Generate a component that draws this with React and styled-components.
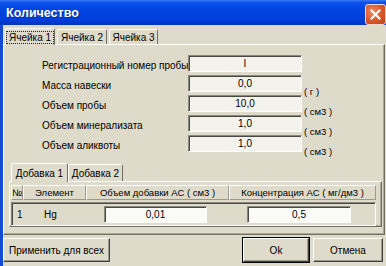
import React from 'react';
import styled, { createGlobalStyle } from 'styled-components';

const GlobalStyle = createGlobalStyle`
  html, body { margin: 0; padding: 0; background: #dfdbca; }
  body { font-family: "Liberation Sans", Arial, sans-serif; }
`;

const Window = styled.div`
  width: 386px;
  height: 266px;
  display: flex;
  flex-direction: column;
  overflow: hidden;
  background: #dfdbca;
  font-family: "Liberation Sans", Arial, sans-serif;
  font-size: 10px;
  color: #000;
`;

const TitleBar = styled.div`
  height: 25px;
  flex: none;
  display: flex;
  align-items: center;
  justify-content: space-between;
  padding-left: 6px;
  background: linear-gradient(to bottom, #3b78f0 0%, #0c52ea 10%, #0045e2 35%, #003edb 80%, #0033c0 100%);
`;

const Title = styled.span`
  color: #fff;
  font-weight: bold;
  font-size: 12.5px;
  text-shadow: 1px 1px 0 #0b2a90;
`;

const CloseButton = styled.div`
  width: 19px;
  height: 19px;
  margin-top: 3px;
  border: 1px solid #f4d8d0;
  border-radius: 3px;
  background: radial-gradient(circle at 35% 35%, #f08a68 0%, #e0582f 50%, #c23d16 100%);
  display: flex;
  align-items: center;
  justify-content: center;
`;

const Client = styled.div`
  flex: 1;
  display: flex;
  flex-direction: column;
  border-left: 3px solid #1a48d6;
  padding: 3px 1px 4px 0;
`;

const TabStrip = styled.div`
  display: flex;
  align-items: flex-end;
  gap: ${p => p.$gap ?? 2}px;
  padding-left: 2px;
  height: ${p => p.$h || 16}px;
  position: relative;
  z-index: 1;
`;

const Tab = styled.div`
  width: ${p => p.$w}px;
  height: ${p => (p.$active ? p.$h + 2 : p.$h)}px;
  box-sizing: border-box;
  display: flex;
  align-items: center;
  justify-content: center;
  background: #dfdbca;
  border-top: 1px solid #fff;
  border-left: 1px solid #fff;
  border-right: 1px solid #716f64;
  border-radius: 2px 2px 0 0;
  margin-bottom: ${p => (p.$active ? -1 : 0)}px;
  font-size: 10px;
  white-space: nowrap;
`;

const FocusText = styled.span`
  outline: ${p => (p.$focus ? '1px dotted #222' : 'none')};
  outline-offset: 0;
  padding: 0 2px;
  line-height: 11px;
`;

const Panel = styled.div`
  flex: 1;
  display: flex;
  flex-direction: column;
  border-top: 1px solid #fff;
  border-left: 1px solid #fff;
  border-right: 1px solid #716f64;
  border-bottom: 1px solid #716f64;
  box-shadow: inset -1px -1px 0 #aca899;
  padding: ${p => p.$pad};
`;

const FieldGrid = styled.div`
  display: grid;
  grid-template-columns: 144px 114px auto;
  grid-auto-rows: 20px;
  column-gap: 2px;
  padding-left: 38px;
`;

const Label = styled.div`
  font-size: 10px;
  padding-top: 5px;
  white-space: nowrap;
`;

const Field = styled.div`
  height: 17px;
  width: ${p => (p.$w ? `${p.$w}px` : 'auto')};
  box-sizing: border-box;
  border-top: 1px solid #8a887c;
  border-left: 1px solid #8a887c;
  border-right: 1px solid #fff;
  border-bottom: 1px solid #fff;
  box-shadow: inset 1px 1px 0 #4a4a44;
  background: ${p => (p.$white ? '#fbfbf8' : '#f3f2ec')};
  display: flex;
  align-items: center;
  justify-content: center;
  font-size: 10px;
  margin-left: ${p => p.$ml || 0}px;
`;

const Unit = styled.div`
  font-size: 9.5px;
  padding-top: 11px;
  white-space: nowrap;
`;

const SubArea = styled.div`
  display: flex;
  flex-direction: column;
  margin: 8px 2px 0 5px;
`;

const SubPanel = styled(Panel)`
  flex: none;
  height: 46px;
  box-sizing: border-box;
`;

const TableGrid = styled.div`
  display: grid;
  grid-template-columns: 12px 63px 143px 147px;
`;

const HeaderCell = styled.div`
  height: 15px;
  box-sizing: border-box;
  border-top: 1px solid #fff;
  border-left: 1px solid #fff;
  border-right: 1px solid #9d9a8c;
  border-bottom: 1px solid #9d9a8c;
  display: flex;
  align-items: center;
  justify-content: center;
  font-size: 9.5px;
  white-space: nowrap;
  overflow: hidden;
`;

const DataRow = styled(TableGrid)`
  margin-top: 2px;
  height: 24px;
  box-sizing: border-box;
  border-top: 1px solid #8a887c;
  border-left: 1px solid #8a887c;
  border-right: 1px solid #fff;
  border-bottom: 1px solid #fff;
  box-shadow: inset 1px 1px 0 #4a4a44;
  align-items: center;
  width: 365px;
`;

const Cell = styled.div`
  font-size: 10px;
  padding-left: ${p => p.$pl || 0}px;
  display: flex;
  align-items: center;
`;

const Footer = styled.div`
  display: flex;
  align-items: center;
  margin-top: 3px;
`;

const Button = styled.div`
  height: 24px;
  width: ${p => p.$w}px;
  box-sizing: border-box;
  display: flex;
  align-items: center;
  justify-content: center;
  font-size: 10px;
  background: #dfdbca;
  border-top: 1px solid #fff;
  border-left: 1px solid #fff;
  border-right: 1px solid #404040;
  border-bottom: 1px solid #404040;
  box-shadow: inset -1px -1px 0 #9d9a8c;
  outline: ${p => (p.$default ? '1px solid #000' : 'none')};
  outline-offset: 0;
  margin-left: ${p => p.$ml || 0}px;
`;

const fields = [
  { label: 'Регистрационный номер пробы', value: 'I', unit: '' },
  { label: 'Масса навески', value: '0,0', unit: '( г )' },
  { label: 'Объем пробы', value: '10,0', unit: '( см3 )' },
  { label: 'Объем минерализата', value: '1,0', unit: '( см3 )' },
  { label: 'Объем аликвоты', value: '1,0', unit: '( см3 )' },
];

export default function App() {
  return (
    <Window>
      <GlobalStyle />
      <TitleBar>
        <Title>Количество</Title>
        <CloseButton>
          <svg width="11" height="11" viewBox="0 0 11 11">
            <path d="M1.5 1.5 L9.5 9.5 M9.5 1.5 L1.5 9.5" stroke="#fff" strokeWidth="2" strokeLinecap="square" />
          </svg>
        </CloseButton>
      </TitleBar>
      <Client>
        <TabStrip $h={16}>
          <Tab $h={15} $w={50} $active><FocusText $focus>Ячейка 1</FocusText></Tab>
          <Tab $h={15} $w={50}><FocusText>Ячейка 2</FocusText></Tab>
          <Tab $h={15} $w={49}><FocusText>Ячейка 3</FocusText></Tab>
        </TabStrip>
        <Panel $pad="10px 0 0 0">
          <FieldGrid>
            {fields.map(f => (
              <React.Fragment key={f.label}>
                <Label>{f.label}</Label>
                <Field>{f.value}</Field>
                <Unit>{f.unit}</Unit>
              </React.Fragment>
            ))}
          </FieldGrid>
          <SubArea>
            <TabStrip $h={18} $gap={0}>
              <Tab $h={17} $w={57} $active><FocusText>Добавка 1</FocusText></Tab>
              <Tab $h={17} $w={55}><FocusText>Добавка 2</FocusText></Tab>
            </TabStrip>
            <SubPanel $pad="3px 0 0 1px">
              <TableGrid>
                <HeaderCell>№</HeaderCell>
                <HeaderCell>Элемент</HeaderCell>
                <HeaderCell>Объем добавки АС ( см3 )</HeaderCell>
                <HeaderCell>Концентрация АС ( мг/дм3 )</HeaderCell>
              </TableGrid>
              <DataRow>
                <Cell $pl={5}>1</Cell>
                <Cell $pl={20}>Hg</Cell>
                <Cell><Field $w={103} $ml={17} $white>0,01</Field></Cell>
                <Cell><Field $w={104} $ml={17} $white>0,5</Field></Cell>
              </DataRow>
            </SubPanel>
          </SubArea>
        </Panel>
        <Footer>
          <Button $w={107}>Применить для всех</Button>
          <Button $w={66} $ml={133} $default>Ok</Button>
          <Button $w={70} $ml={4}>Отмена</Button>
        </Footer>
      </Client>
    </Window>
  );
}
